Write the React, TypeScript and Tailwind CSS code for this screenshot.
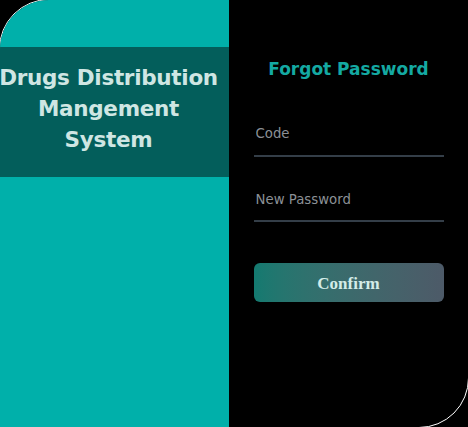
import { useState } from "react";

const ForgotPassword = () => {
  const [code, setCode] = useState<string>("");
  const [password, setPassword] = useState<string>("");

  return (
    <div className="h-[427px] w-[468px] overflow-hidden bg-black">
      <div className="-m-px flex h-[429px] w-[470px] overflow-hidden rounded-tl-[50px] rounded-br-[50px] border border-white bg-black">
        {/* left side */}
        <div className="flex w-[229px] shrink-0 flex-col bg-[#00b0aa] pt-[47px]">
          <div className="flex h-[130px] items-center justify-center bg-[#035e5b] pb-[8px] pr-[12px]">
            <h1 className="whitespace-nowrap text-center font-['DejaVu_Sans',sans-serif] text-[21.5px] font-bold leading-[31px] tracking-[-0.3px] text-[#cfe6e3]">
              Drugs Distribution
              <br />
              Mangement
              <br />
              System
            </h1>
          </div>
        </div>

        {/* right side */}
        <div className="flex flex-1 flex-col items-center pt-[57px]">
          <h2 className="font-['DejaVu_Sans',sans-serif] text-[17px] font-bold leading-[24px] text-[#14a9a2]">
            Forgot Password
          </h2>
          <div className="mt-[37px] flex w-[190px] flex-col gap-[27px]">
            <input
              value={code}
              onChange={(e) => setCode(e.target.value)}
              placeholder="Code"
              className="h-[39px] border-b-2 border-[#343e48] bg-transparent px-[2px] pb-[7px] font-['DejaVu_Sans',sans-serif] text-[13.3px] text-[#d1d5db] placeholder:text-[#8b9096] focus:outline-none"
            />
            <input
              value={password}
              onChange={(e) => setPassword(e.target.value)}
              type="password"
              placeholder="New Password"
              className="h-[38px] border-b-2 border-[#343e48] bg-transparent px-[2px] pb-[6px] font-['DejaVu_Sans',sans-serif] text-[13.3px] text-[#d1d5db] placeholder:text-[#8b9096] focus:outline-none"
            />
          </div>
          <button className="mt-[41px] h-[39px] w-[190px] rounded-[6px] bg-gradient-to-r from-[#137a70] to-[#4d5a68] pt-[2px] font-['Liberation_Serif',serif] text-[17px] font-bold text-[#d3ece8]">
            Confirm
          </button>
        </div>
      </div>
    </div>
  );
};

export default function App() {
  return <ForgotPassword />;
}
